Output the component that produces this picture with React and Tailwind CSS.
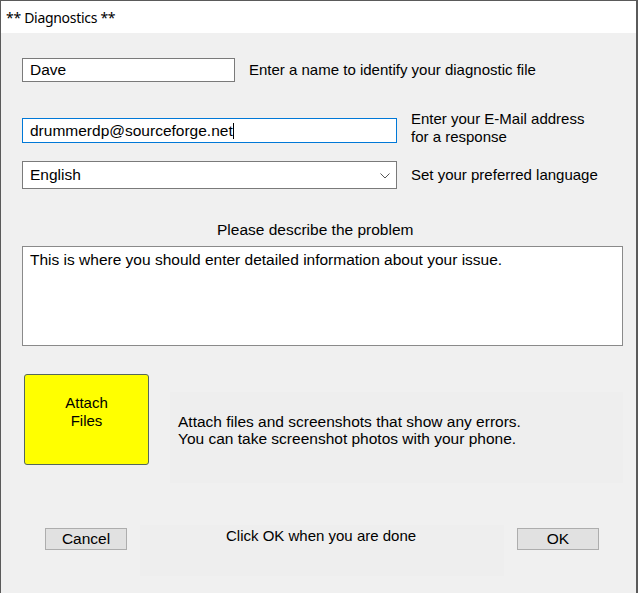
export default function App() {
  const body = { fontFamily: '"Liberation Sans", Arial, sans-serif' };
  return (
    <div className="w-[638px] h-[593px] flex flex-col border-l border-t border-r-2 border-[#5a5a5a] bg-[#f0f0f0] text-black" style={body}>
      <div className="h-[32px] shrink-0 bg-white flex items-center pl-[5px] text-[14px] tracking-[-0.3px]" style={{ fontFamily: '"Noto Sans", "Open Sans", sans-serif' }}>
        ** Diagnostics **
      </div>
      <div className="flex-1 flex flex-col pl-[21px] text-[15px]">
        {/* Row 1 */}
        <div className="mt-[25px] flex items-center">
          <div className="w-[213px] h-[24px] bg-white border border-[#7a7a7a] flex items-center pl-[7px] leading-none text-[15.5px]">Dave</div>
          <div className="ml-[14px] leading-[16px]">Enter a name to identify your diagnostic file</div>
        </div>
        {/* Row 2 */}
        <div className="mt-[28px] flex items-start">
          <div className="mt-[8px] w-[375px] h-[25px] bg-white border border-[#0078d7] flex items-center pl-[7px] leading-none text-[15.5px]">
            <span>drummerdp@sourceforge.net</span>
            <span className="inline-block w-px h-[16px] bg-black" />
          </div>
          <div className="ml-[14px] leading-[18px]">
            Enter your E-Mail address
            <br />
            for a response
          </div>
        </div>
        {/* Row 3 */}
        <div className="mt-[15px] flex items-center">
          <div className="w-[375px] h-[28px] bg-white border border-[#7a7a7a] flex items-center pl-[7px] pr-[6px] leading-none text-[15.5px]">
            <span className="flex-1">English</span>
            <svg width="10" height="6" viewBox="0 0 10 6" className="mt-[1px]">
              <path d="M0.5 0.5 L5 5 L9.5 0.5" fill="none" stroke="#555" strokeWidth="1" />
            </svg>
          </div>
          <div className="ml-[14px] leading-[16px]">Set your preferred language</div>
        </div>
        {/* Describe */}
        <div className="mt-[33px] pl-[195px] leading-[16px] text-[15.5px]">Please describe the problem</div>
        <div className="mt-[8px] w-[601px] h-[100px] bg-white border border-[#8a8a8a] pl-[7px] pt-[5px] leading-[16px] text-[15.5px]">
          This is where you should enter detailed information about your issue.
        </div>
        {/* Attach row */}
        <div className="mt-[28px] flex items-start">
          <div className="ml-[2px] w-[125px] h-[91px] bg-[#ffff00] border border-[#55685c] rounded-[3px] flex flex-col items-center pt-[19px] leading-[18px]">
            <span>Attach</span>
            <span>Files</span>
          </div>
          <div className="ml-[21px] mt-[18px] w-[453px] h-[91px] bg-[#eeeeee] pl-[8px] pt-[21px] leading-[17px] text-[15.5px]">
            Attach files and screenshots that show any errors.
            <br />
            You can take screenshot photos with your phone.
          </div>
        </div>
        {/* Bottom row */}
        <div className="mt-[42px] flex items-start">
          <button className="ml-[23px] mt-[3px] w-[82px] h-[22px] bg-[#e1e1e1] border border-[#adadad] text-[15.5px] leading-none">Cancel</button>
          <div className="ml-[13px] w-[364px] h-[51px] bg-[#eeeeee] pl-[86px] pt-[3px] leading-[16px]">Click OK when you are done</div>
          <button className="ml-[13px] mt-[3px] w-[82px] h-[22px] bg-[#e1e1e1] border border-[#adadad] text-[15.5px] leading-none">OK</button>
        </div>
      </div>
    </div>
  );
}
